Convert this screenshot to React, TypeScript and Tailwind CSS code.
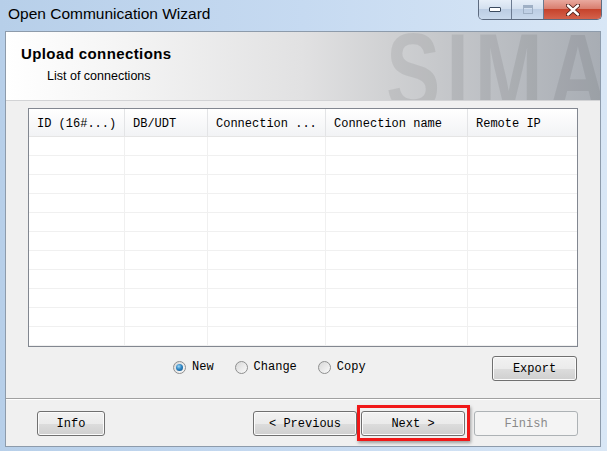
import React from "react";

const cols = ["ID (16#...)", "DB/UDT", "Connection ...", "Connection name", "Remote IP"];
const rows = Array.from({ length: 11 });

const btn =
    "h-[25px] rounded-[3px] border border-[#707070] bg-[linear-gradient(#f2f2f2_0%,#ebebeb_50%,#dddddd_50%,#cfcfcf_100%)] shadow-[inset_0_0_0_1px_#fbfbfb] text-[12px] text-black [font-family:'Liberation_Mono',monospace] flex items-center justify-center";

function Radio({ label, checked }: { label: string; checked?: boolean }) {
    return (
        <div className="flex items-center gap-[6px]">
            <span className="w-[13px] h-[13px] rounded-full border border-[#8e8f8f] bg-[linear-gradient(135deg,#d8d8d8,#fafafa)] flex items-center justify-center">
                {checked && (
                    <span className="w-[7px] h-[7px] rounded-full bg-[radial-gradient(circle_at_40%_35%,#9fd8f7_0%,#2f86c4_45%,#0c4a7c_100%)]" />
                )}
            </span>
            <span className="text-[12px] text-black [font-family:'Liberation_Mono',monospace]">{label}</span>
        </div>
    );
}

export default function App() {
    return (
        <div className="w-[607px] h-[451px] flex flex-col overflow-hidden bg-[linear-gradient(90deg,#b7cfe9_0%,#c6daf1_50%,#d9e7f6_100%)] [font-family:'Liberation_Sans',Arial,sans-serif]">

            {/* title bar */}
            <div className="h-[31px] flex items-start shrink-0">
                <span className="pl-[8px] pt-[5px] text-[15.5px] leading-[18px] text-black">Open Communication Wizard</span>

                <div className="ml-auto mr-[5px] flex h-[20px] rounded-b-[5px] border border-t-0 border-[#5d6b80] overflow-hidden">
                    <div className="w-[33px] flex items-center justify-center border-r border-[#6b7a90] bg-[linear-gradient(#e6eef8_0%,#d2dfee_50%,#bccde3_50%,#c9d9ec_100%)]">
                        <span className="w-[12px] h-[5px] rounded-[1px] border border-[#3b4a5e] bg-white" />
                    </div>
                    <div className="w-[32px] flex items-center justify-center border-r border-[#6b7a90] bg-[linear-gradient(#e6eef8_0%,#d2dfee_50%,#bccde3_50%,#c9d9ec_100%)]">
                        <span className="w-[10px] h-[9px] border border-[#9fb0c5] shadow-[inset_0_2px_0_#9fb0c5]" />
                    </div>
                    <div className="w-[57px] flex items-center justify-center bg-[linear-gradient(#e9a99e_0%,#d77a6a_50%,#c6432c_50%,#d4624c_100%)]">
                        <svg width="14" height="12" viewBox="0 0 14 12">
                            <path d="M2 1.5 L12 10.5 M12 1.5 L2 10.5" stroke="#4a1e18" strokeWidth="4.2" strokeLinecap="round" />
                            <path d="M2 1.5 L12 10.5 M12 1.5 L2 10.5" stroke="#ffffff" strokeWidth="2.4" strokeLinecap="round" />
                        </svg>
                    </div>
                </div>
            </div>

            {/* client area */}
            <div className="flex-1 ml-[5px] mr-[6px] mb-[4px] border border-[#8d9bab] bg-[#f0f0f0] flex flex-col">

                {/* header */}
                <div className="relative h-[69px] shrink-0 overflow-hidden border-b border-[#d2d3d5] bg-[linear-gradient(90deg,#ffffff_0%,#f4f4f4_20%,#e1e1e2_50%,#cfd0d2_65%,#a8adb4_100%)]">
                    <span className="absolute left-[380px] top-[5px] origin-left scale-x-[0.74] text-[110px] leading-[70px] font-bold tracking-[8px] text-black/[0.075] select-none">SIMA</span>
                    <div className="relative pl-[15px] pt-[13px]">
                        <p className="text-[15px] leading-[17px] font-bold tracking-[0.4px] text-black">Upload connections</p>
                        <p className="pl-[26px] pt-[7px] text-[12.5px] leading-[15px] text-black">List of connections</p>
                    </div>
                </div>

                {/* list */}
                <div className="ml-[22px] mt-[7px] w-[550px] h-[239px] border border-[#828790] bg-white flex flex-col overflow-hidden">
                    <div className="grid grid-cols-[96px_83px_118px_142px_1fr] h-[28px] shrink-0 border-b border-[#e5e5e5] bg-[linear-gradient(#ffffff,#f2f3f5)]">
                        {cols.map((c, i) => (
                            <div key={c} className={`pl-[8px] pt-[3px] flex items-center whitespace-nowrap overflow-hidden text-[12px] text-black [font-family:'Liberation_Mono',monospace] ${i < 4 ? "border-r border-[#e3e4e6]" : ""}`}>
                                {c}
                            </div>
                        ))}
                    </div>
                    {rows.map((_, r) => (
                        <div key={r} className="grid grid-cols-[96px_83px_118px_142px_1fr] h-[19px] shrink-0 border-b border-[#f0f0f0]">
                            {cols.map((c, i) => (
                                <div key={c} className={i < 4 ? "border-r border-[#f0f0f0]" : ""} />
                            ))}
                        </div>
                    ))}
                </div>

                {/* options */}
                <div className="mt-[9px] h-[25px] flex items-center pl-[167px] pr-[23px]">
                    <div className="flex items-center gap-[21px] -mt-[3px]">
                        <Radio label="New" checked />
                        <Radio label="Change" />
                        <Radio label="Copy" />
                    </div>
                    <button className={`${btn} ml-auto w-[85px]`}>Export</button>
                </div>

                {/* footer */}
                <div className="mt-auto h-[48px] pt-[2px] border-t border-[#a0a0a0] shadow-[inset_0_1px_0_#ffffff] flex items-center pl-[31px] pr-[22px]">
                    <button className={`${btn} w-[68px]`}>Info</button>
                    <button className={`${btn} ml-auto w-[104px]`}>&lt; Previous</button>
                    <div className="relative ml-[4px]">
                        <button className={`${btn} w-[104px] border-[#3c7fb1] shadow-[inset_0_0_0_1px_#9edcf5]`}>Next &gt;</button>
                        <span className="absolute left-[-4px] right-[-5px] top-[-6px] bottom-[-5px] border-[3px] border-[#f01818] shadow-[1px_2px_3px_rgba(0,0,0,0.35)]" />
                    </div>
                    <button className="ml-[9px] w-[104px] h-[25px] rounded-[3px] border border-[#adb2b5] bg-[#f4f4f4] text-[12px] text-[#8a8a8a] [font-family:'Liberation_Mono',monospace] flex items-center justify-center">Finish</button>
                </div>
            </div>
        </div>
    );
}
